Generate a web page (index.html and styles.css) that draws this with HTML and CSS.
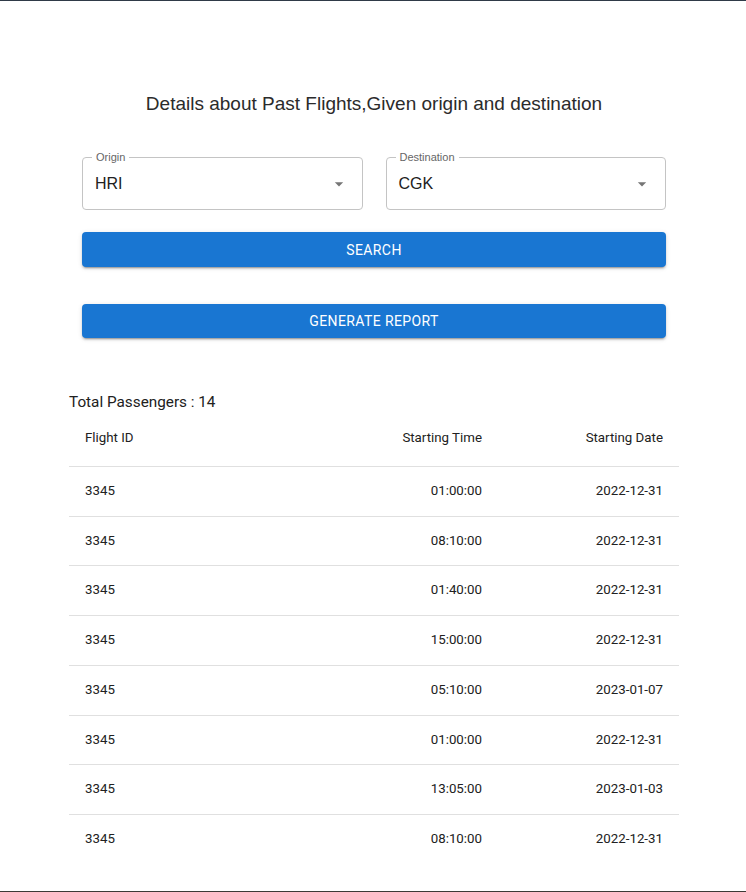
FILE: index.html
```html
<!DOCTYPE html>
<html>
<head>
<meta charset="utf-8">
<link rel="stylesheet" href="styles.css">
</head>
<body>
<div class="page">
  <div class="container">
    <h1 class="title">Details about Past Flights,Given origin and destination</h1>
    <div class="form">
      <div class="selects">
        <div class="field">
          <span class="label">Origin</span>
          <span class="value">HRI</span>
          <svg class="arrow" width="20" height="20" viewBox="0 0 24 24"><path d="M7 10l5 5 5-5z" fill="#757575"/></svg>
        </div>
        <div class="field">
          <span class="label">Destination</span>
          <span class="value">CGK</span>
          <svg class="arrow" width="20" height="20" viewBox="0 0 24 24"><path d="M7 10l5 5 5-5z" fill="#757575"/></svg>
        </div>
      </div>
      <button class="btn btn-search">Search</button>
      <button class="btn btn-report">Generate Report</button>
    </div>
    <p class="total">Total Passengers : 14</p>
    <table class="table">
      <thead>
        <tr><th class="c1">Flight ID</th><th class="c2">Starting Time</th><th class="c3">Starting Date</th></tr>
      </thead>
      <tbody>
        <tr><td class="c1">3345</td><td class="c2">01:00:00</td><td class="c3">2022-12-31</td></tr>
        <tr><td class="c1">3345</td><td class="c2">08:10:00</td><td class="c3">2022-12-31</td></tr>
        <tr><td class="c1">3345</td><td class="c2">01:40:00</td><td class="c3">2022-12-31</td></tr>
        <tr><td class="c1">3345</td><td class="c2">15:00:00</td><td class="c3">2022-12-31</td></tr>
        <tr><td class="c1">3345</td><td class="c2">05:10:00</td><td class="c3">2023-01-07</td></tr>
        <tr><td class="c1">3345</td><td class="c2">01:00:00</td><td class="c3">2022-12-31</td></tr>
        <tr><td class="c1">3345</td><td class="c2">13:05:00</td><td class="c3">2023-01-03</td></tr>
        <tr class="last"><td class="c1">3345</td><td class="c2">08:10:00</td><td class="c3">2022-12-31</td></tr>
      </tbody>
    </table>
  </div>
</div>
</body>
</html>
```
FILE: styles.css
```css
html, body {
  margin: 0;
  padding: 0;
  background: #fff;
}
.page {
  height: 892px;
  box-sizing: border-box;
  border-top: 1px solid #2f3a48;
  border-bottom: 1px solid #3d3a36;
  overflow: hidden;
}
.container {
  width: 610px;
  margin-left: 69px;
}
.title {
  margin: 92px 0 0 0;
  font-family: "Liberation Sans", Arial, sans-serif;
  font-weight: 400;
  font-size: 19px;
  line-height: 22px;
  color: #2b2b2b;
  text-align: center;
}
.form {
  padding: 0 13px;
  margin-top: 42px;
  display: flex;
  flex-direction: column;
}
.selects {
  display: flex;
  gap: 23px;
}
.field {
  position: relative;
  flex: 1;
  height: 53px;
  box-sizing: border-box;
  border: 1px solid #c4c4c4;
  border-radius: 4px;
  display: flex;
  align-items: center;
  padding: 0 14px 0 12px;
}
.label {
  position: absolute;
  left: 9px;
  top: -8px;
  padding: 0 4px;
  background: #fff;
  font-family: "Liberation Sans", Arial, sans-serif;
  font-size: 11px;
  line-height: 14px;
  color: #666;
}
.value {
  flex: 1;
  font-family: "Liberation Sans", Arial, sans-serif;
  font-size: 16px;
  color: #212121;
  padding-top: 1px;
}
.arrow {
  flex: none;
  margin-right: -1px;
}
.btn {
  display: block;
  width: 100%;
  border: none;
  border-radius: 4px;
  background: #1976d2;
  color: #fff;
  font-family: Roboto, "Liberation Sans", sans-serif;
  font-weight: 400;
  font-size: 14px;
  letter-spacing: 0.4px;
  text-transform: uppercase;
  box-shadow: 0 3px 1px -2px rgba(0,0,0,0.2), 0 2px 2px 0 rgba(0,0,0,0.14), 0 1px 5px 0 rgba(0,0,0,0.12);
  padding: 0;
}
.btn-search {
  margin-top: 22px;
  height: 35px;
}
.btn-report {
  margin-top: 37px;
  height: 34px;
}
.total {
  margin: 52px 0 0 0;
  font-family: Roboto, "Liberation Sans", sans-serif;
  font-size: 15.3px;
  line-height: 24px;
  color: #212121;
}
.table {
  width: 610px;
  border-collapse: collapse;
  table-layout: fixed;
  font-family: Roboto, "Liberation Sans", sans-serif;
  font-size: 13.3px;
  color: #212121;
}
.table th, .table td {
  border-bottom: 1px solid #e0e0e0;
  padding: 16px;
  font-weight: 400;
}
.table th {
  line-height: 24px;
  padding-top: 12px;
}
.table td {
  line-height: 16.7px;
}
.table .last td {
  border-bottom: none;
}
.c1 { width: 216px; text-align: left; }
.c2 { width: 149px; text-align: right; }
.c3 { width: 149px; text-align: right; }
```
